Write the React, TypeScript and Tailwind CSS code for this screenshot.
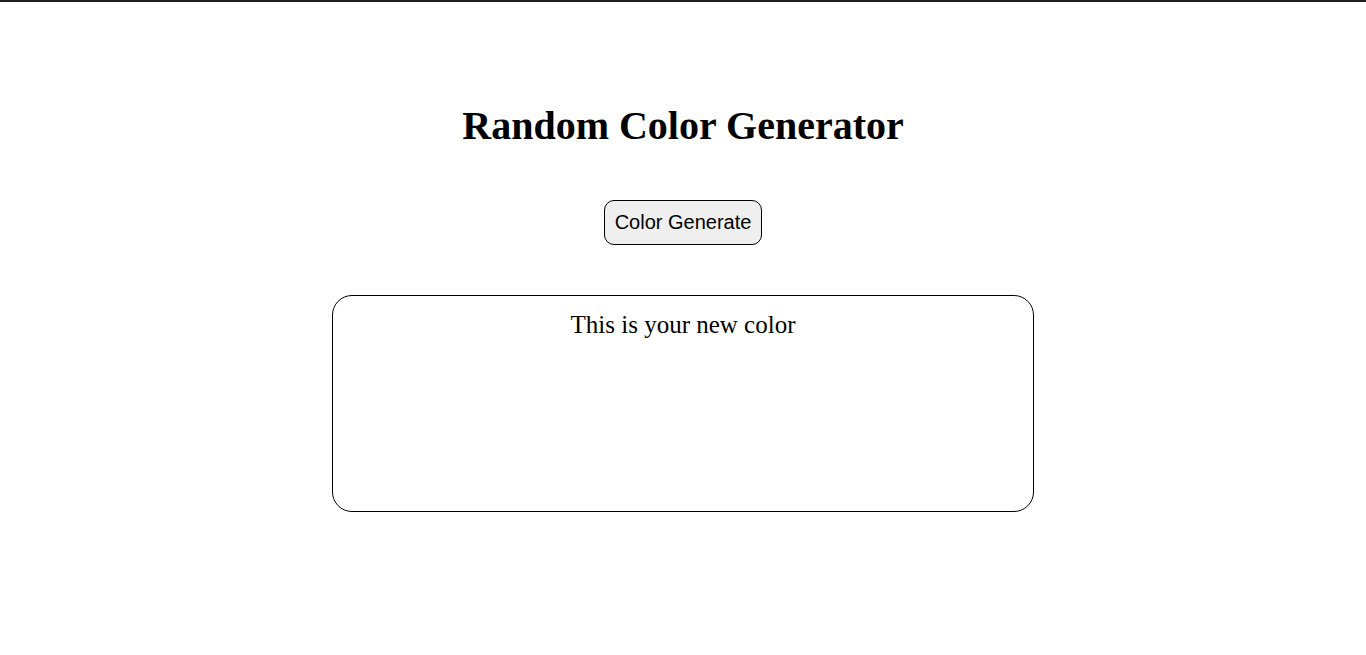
export default function App() {
  return (
    <div className="min-h-[655px] bg-white border-t-2 border-[#202124]">
      <div className="flex flex-col items-center pt-[101px]">
        <h1 className="font-['Liberation_Serif',serif] text-[40px] font-bold leading-[46px] text-black">
          Random Color Generator
        </h1>
        <button
          type="button"
          className="mt-[51px] h-[45px] px-[10px] pb-[2px] rounded-[10px] border border-black bg-[#efefef] font-['Liberation_Sans',Arial,sans-serif] text-[20px] text-black"
        >
          Color Generate
        </button>
        <div className="mt-[50px] w-[702px] h-[217px] rounded-[20px] border border-black pt-[15px] text-center">
          <p className="font-['Liberation_Serif',serif] text-[25px] leading-[28px] text-black">
            This is your new color
          </p>
        </div>
      </div>
    </div>
  );
}
